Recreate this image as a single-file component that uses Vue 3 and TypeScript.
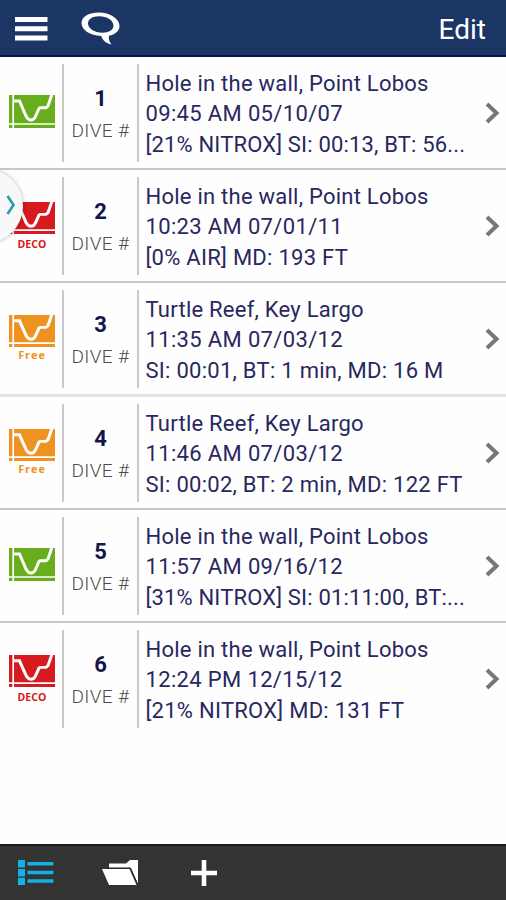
<script setup lang="ts">
type Mode = 'gas' | 'deco' | 'free'

interface Dive {
  id: number
  mode: Mode
  label?: string
  place: string
  time: string
  details: string
}

const dives: Dive[] = [
  { id: 1, mode: 'gas', place: 'Hole in the wall, Point Lobos', time: '09:45 AM 05/10/07', details: '[21% NITROX] SI: 00:13, BT: 56...' },
  { id: 2, mode: 'deco', label: 'DECO', place: 'Hole in the wall, Point Lobos', time: '10:23 AM 07/01/11', details: '[0% AIR] MD: 193 FT' },
  { id: 3, mode: 'free', label: 'Free', place: 'Turtle Reef, Key Largo', time: '11:35 AM 07/03/12', details: 'SI: 00:01, BT: 1 min, MD: 16 M' },
  { id: 4, mode: 'free', label: 'Free', place: 'Turtle Reef, Key Largo', time: '11:46 AM 07/03/12', details: 'SI: 00:02, BT: 2 min, MD: 122 FT' },
  { id: 5, mode: 'gas', place: 'Hole in the wall, Point Lobos', time: '11:57 AM 09/16/12', details: '[31% NITROX] SI: 01:11:00, BT:...' },
  { id: 6, mode: 'deco', label: 'DECO', place: 'Hole in the wall, Point Lobos', time: '12:24 PM 12/15/12', details: '[21% NITROX] MD: 131 FT' },
]
</script>

<template>
  <div class="screen">
    <header class="topbar">
      <svg class="menu" width="34" height="26" viewBox="0 0 34 26">
        <path d="M1 3.500h32.500M1 12.800h32.500M1 22h32.500" stroke="#fff" stroke-width="5" />
      </svg>
      <svg class="chat" width="40" height="34" viewBox="0 0 40 34">
        <path fill="#fff" fill-rule="evenodd" d="M18 0.500C28.500 0.500 38.500 6.500 38.500 14C38.500 19 34 22.500 28 23.800C27.300 27 28.300 30 30.500 32.500C25 31.500 21.500 28 20.300 24C9 23.500 0.500 18 0.500 11C0.500 4.500 8.500 0.500 18 0.500ZM18 4.200C11.500 4.200 7 7 7 11.500C7 16.500 13.500 20.700 21.500 20.700C28 20.700 32.500 18 32.500 13.500C32.500 8.300 26 4.200 18 4.200Z" />
      </svg>
      <span class="edit">Edit</span>
    </header>

    <main class="list">
      <article v-for="dive in dives" :key="dive.id" class="row" :class="dive.mode">
        <div class="kind">
          <svg class="profile" width="46" height="33" viewBox="0 0 46 33" preserveAspectRatio="none">
            <path fill="currentColor" d="M0 0H46V33H0Z" />
            <path d="M4.200 0V33M0 29H46" fill="none" stroke="#fff" stroke-width="1.700" />
            <path d="M5 6H10.500L17 21Q19 25 22 25Q25 25 26.500 21.500L30 13.500Q30.500 12.800 31.500 12.800H37L39 11L43 -1" fill="none" stroke="#fff" stroke-width="3" />
          </svg>
          <span v-if="dive.label" class="tag">{{ dive.label }}</span>
        </div>
        <div class="number">
          <strong>{{ dive.id }}</strong>
          <span>DIVE #</span>
        </div>
        <div class="info">
          <p class="place">{{ dive.place }}</p>
          <p class="time">{{ dive.time }}</p>
          <p class="details">{{ dive.details }}</p>
        </div>
        <svg class="arrow" width="15" height="22" viewBox="0 0 15 22">
          <path d="M2 2L11.500 11L2 20" fill="none" stroke="#777" stroke-width="4" />
        </svg>
      </article>
      <div class="drawer">
        <svg width="10" height="22" viewBox="0 0 10 22">
          <path d="M1.500 2L7.500 11L1.500 20" fill="none" stroke="#2b9aab" stroke-width="2.600" />
        </svg>
      </div>
    </main>

    <footer class="bottombar">
      <svg class="rows" width="36" height="26" viewBox="0 0 36 26">
        <path fill="#16b0e8" d="M0 0H7V7.500H0ZM0 9H7V16.500H0ZM0 17.800H7V25H0ZM9.500 2H35.500V5.500H9.500ZM9.500 10.800H35.500V14.300H9.500ZM9.500 19.300H35.500V22.800H9.500Z" />
      </svg>
      <svg class="folder" width="38" height="28" viewBox="0 0 38 28">
        <path fill="#fff" d="M8 9V4.500H25L29 1H37V25L29.500 9Z" />
        <path fill="#fff" d="M1 10H28.500L35.500 26H8Z" />
        <path fill="none" stroke="#222" stroke-width="1" d="M7 9H29.500L36.500 25" />
      </svg>
      <svg class="plus" width="26" height="26" viewBox="0 0 26 26">
        <path d="M13 0V26M0 13H26" stroke="#fff" stroke-width="4.600" />
      </svg>
    </footer>
  </div>
</template>

<style>
body {
  margin: 0;
  background: #fff;
}
</style>

<style scoped>
.screen {
  width: 506px;
  height: 900px;
  display: flex;
  flex-direction: column;
  overflow: hidden;
  background: #fefefe;
  font-family: Roboto, 'Liberation Sans', sans-serif;
}
svg {
  display: block;
  flex: none;
}
.topbar {
  box-sizing: border-box;
  height: 57px;
  flex: none;
  display: flex;
  align-items: flex-start;
  padding: 0 20px 0 14px;
  background: #1b3664;
  border-bottom: 2px solid #0b1147;
}
.menu {
  margin-top: 16px;
}
.chat {
  margin: 12px 0 0 33px;
}
.edit {
  margin-left: auto;
  margin-top: 13px;
  line-height: 34px;
  font-size: 28px;
  color: #fff;
}
.list {
  position: relative;
  flex: 1;
}
.row {
  box-sizing: border-box;
  height: 113.2px;
  display: flex;
  align-items: flex-start;
  border-bottom: 2px solid #c8c8c8;
}
.row:nth-child(3) {
  border-bottom: 3px solid #e3e3e3;
}
.row:nth-child(6) {
  border-bottom: 0;
}
.kind {
  box-sizing: border-box;
  width: 62px;
  height: 98px;
  margin-top: 7px;
  padding: 31px 0 0 9px;
}
.deco .kind,
.free .kind {
  padding-top: 25px;
}
.deco .profile,
.free .profile {
  height: 32px;
}
.gas {
  color: #68ad1c;
}
.deco {
  color: #d71920;
}
.free {
  color: #ee9322;
}
.tag {
  display: block;
  width: 46px;
  text-align: center;
  font: bold 11px/14px 'Open Sans', sans-serif;
}
.deco .tag {
  font-size: 10.5px;
  letter-spacing: 0.1px;
  margin-top: 3px;
}
.free .tag {
  margin-top: 1px;
  letter-spacing: 0.9px;
}
.number {
  box-sizing: border-box;
  width: 77px;
  height: 98px;
  margin-top: 7px;
  border-left: 2px solid #c8c8c8;
  border-right: 2px solid #c8c8c8;
  padding-top: 21px;
  display: flex;
  flex-direction: column;
  align-items: center;
  color: #15154a;
}
.number strong {
  font-size: 22px;
  line-height: 28px;
}
.number span {
  margin-top: 7px;
  font-size: 19px;
  line-height: 22px;
  letter-spacing: 0.4px;
  color: #4c4c4c;
  font-weight: 300;
  white-space: nowrap;
}
.info {
  width: 341px;
  padding: 12px 0 0 6.5px;
  box-sizing: border-box;
  color: #28285f;
}
.info p {
  margin: 0;
  font-size: 22px;
  line-height: 30px;
  white-space: nowrap;
}
.info .place {
  letter-spacing: 0.24px;
}
.info .time {
  line-height: 29px;
  letter-spacing: 0.35px;
}
.info .details {
  line-height: 33px;
  letter-spacing: 0.27px;
}
.row:nth-child(1) .details {
  letter-spacing: 0.17px;
}
.row:nth-child(5) .details {
  letter-spacing: 0.17px;
}
.arrow {
  margin: 45px 0 0 5px;
}
.drawer {
  position: absolute;
  left: -51px;
  top: 112px;
  width: 74px;
  height: 74px;
  border-radius: 50%;
  background: #f8f8f8;
  box-shadow: 0 0 4px rgba(0, 0, 0, 0.28);
}
.drawer svg {
  margin: 25px 0 0 57px;
}
.bottombar {
  box-sizing: border-box;
  height: 56px;
  flex: none;
  display: flex;
  align-items: flex-start;
  padding-left: 18px;
  background: #333;
  border-top: 2px solid #1c1c1c;
}
.rows {
  margin-top: 14px;
}
.folder {
  margin: 13px 0 0 47px;
}
.plus {
  margin: 14px 0 0 52px;
}
</style>
